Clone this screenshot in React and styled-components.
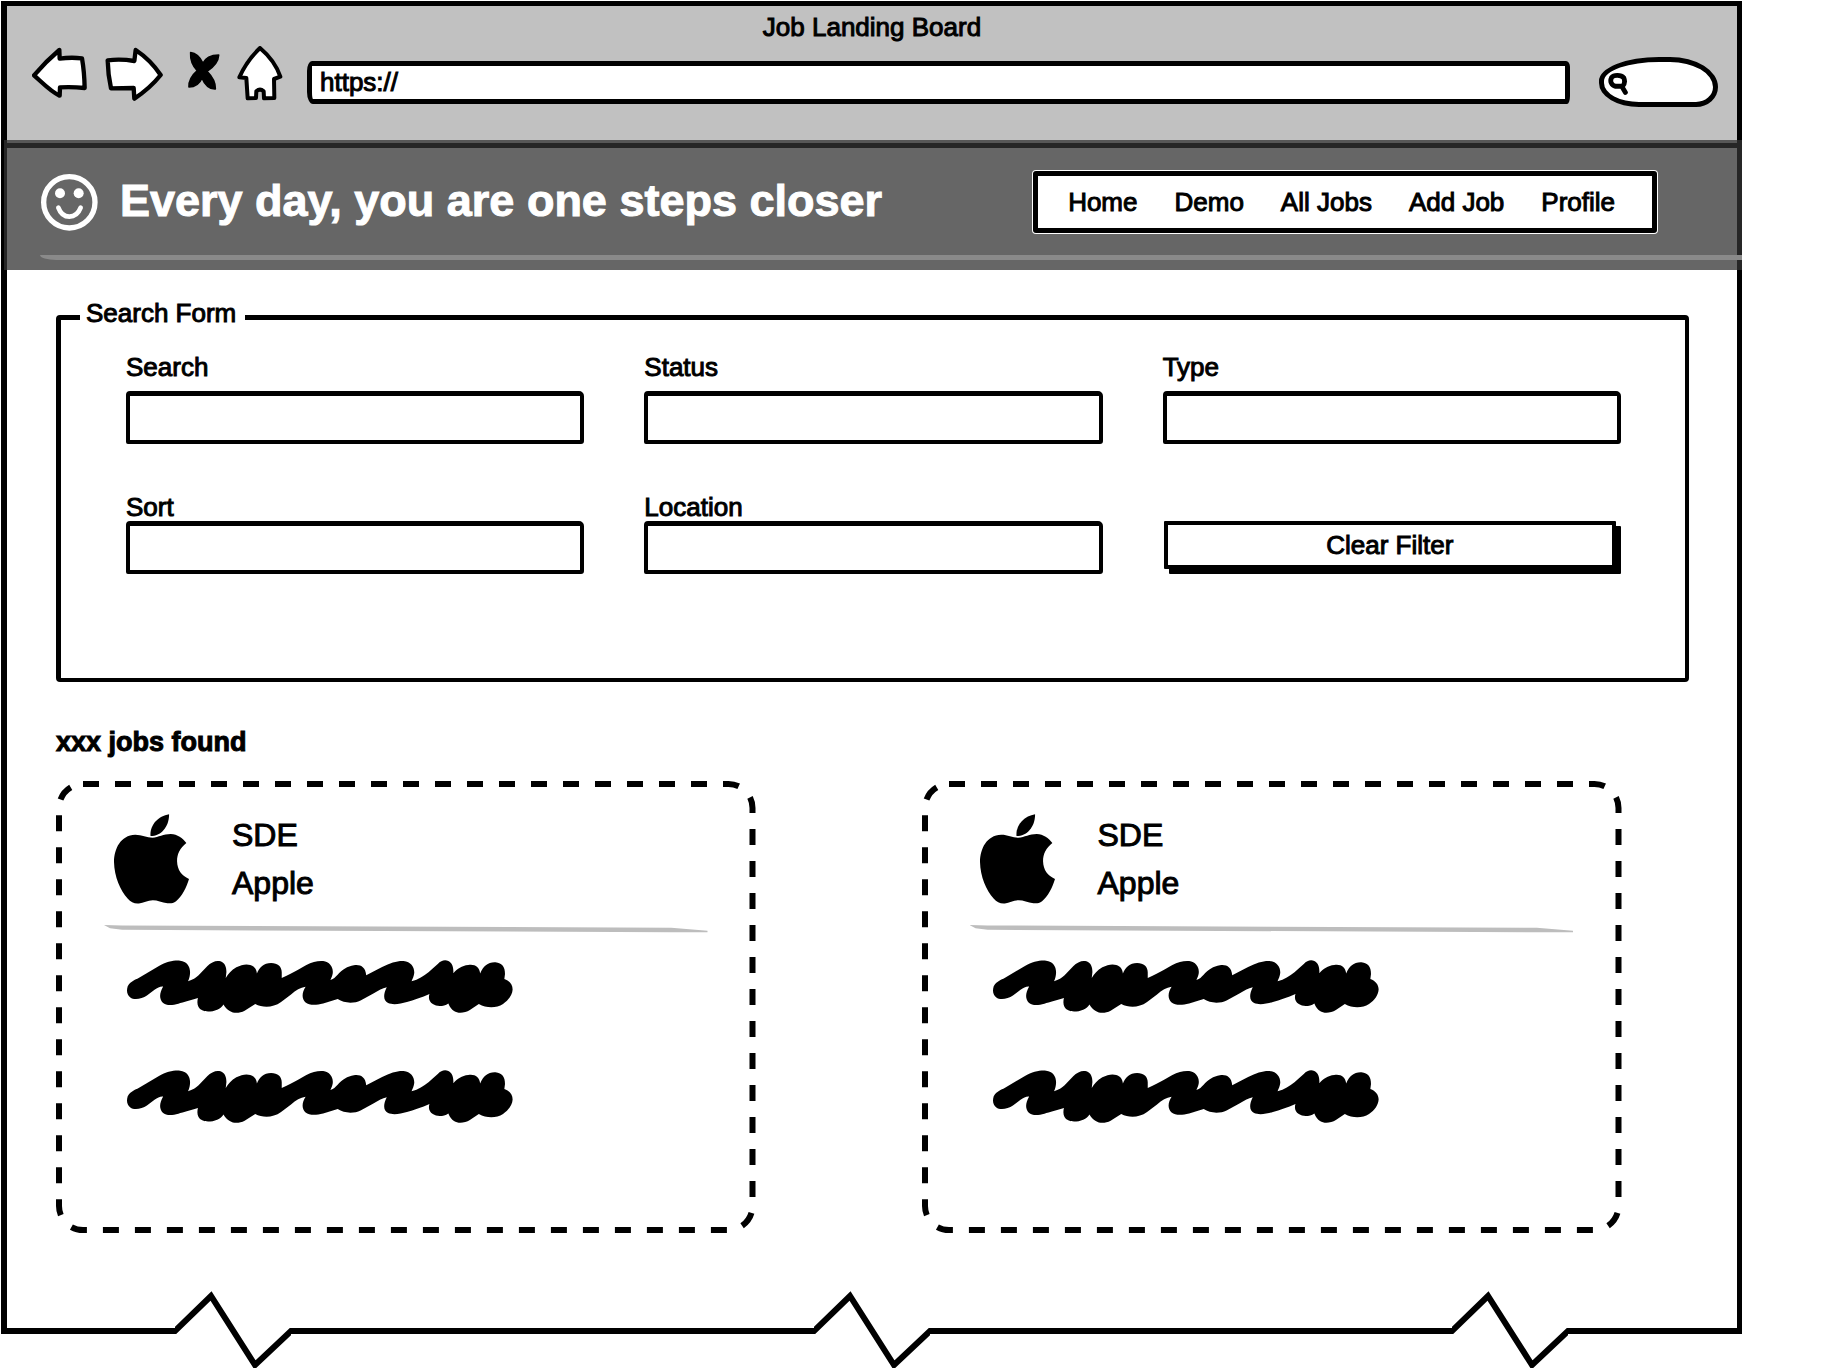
import React from "react";
import styled, { createGlobalStyle } from "styled-components";

const ink = "#000";
const paper = "#fff";

const GlobalStyle = createGlobalStyle`
  *, *::before, *::after { box-sizing: border-box; }
  body {
    margin: 0;
    background: ${paper};
    color: ${ink};
    font-family: "Liberation Sans", Arial, sans-serif;
    font-size: 26px;
    line-height: 30px;
    -webkit-text-stroke: 1px currentColor;
  }
  button, input, select { font: inherit; color: inherit; -webkit-text-stroke: inherit; }
`;

const Page = styled.div`
  padding: 1px 100px 0 1px;
`;

const BrowserWindow = styled.div`
  border: solid ${ink};
  border-width: 5px 5px 0 6px;
`;

const Chrome = styled.div`
  padding: 6px 0 36px;
  background: #c1c1c1;
  border-bottom: 5px solid ${ink};
`;

const WindowTitle = styled.div`
  text-align: center;
`;

const Controls = styled.div`
  display: flex;
  align-items: flex-start;
  gap: 17px;
  margin-top: 4px;
  padding: 0 19px 0 25px;
`;

const ChromeButton = styled.button`
  display: block;
  padding: 0;
  border: 0;
  background: none;
  svg { display: block; }
`;

const Address = styled.input`
  flex: 1;
  min-width: 0;
  height: 43px;
  margin: 15px 12px 0 0;
  padding: 0 8px;
  border: 5px solid ${ink};
  border-radius: 5px 4px 3px 6px / 10px 6px 8px 12px;
  background: ${paper};
`;

const QuickSearch = styled.label`
  display: flex;
  align-items: center;
  width: 119px;
  height: 50px;
  margin-top: 11px;
  padding: 3px 12px 0 4px;
  border: 5px solid ${ink};
  border-radius: 60px 48px 22px 40px / 24px 30px 20px 24px;
  background: ${paper};
  svg { flex: none; }
  input {
    width: 100%;
    min-width: 0;
    padding: 0;
    border: 0;
    outline: 0;
    background: none;
  }
`;

const Banner = styled.header`
  margin: -8px -5px 0 -3px;
  padding-bottom: 10px;
  background: rgba(51, 51, 51, 0.75);
  color: ${paper};
`;

const BannerRow = styled.div`
  display: flex;
  align-items: center;
  padding: 31px 85px 22px 37px;
`;

const Tagline = styled.h1`
  flex: 1;
  margin: 0 0 0 22px;
  padding-bottom: 2px;
  font-size: 45px;
  line-height: 50px;
`;

const Nav = styled.nav`
  display: flex;
  gap: 37px;
  align-items: center;
  height: 62px;
  padding: 0 37px 0 30px;
  border: 5px solid ${ink};
  border-radius: 3px;
  box-shadow: 0 0 0 1px ${paper};
  background: ${paper};
`;

const NavLink = styled.a`
  color: ${ink};
  text-decoration: none;
  white-space: nowrap;
`;

const BannerRule = styled.hr`
  height: 5px;
  margin: 0 0 0 36px;
  border: 0;
  border-bottom-left-radius: 16px 5px;
  background: #8a8a8a;
`;

const Main = styled.main`
  padding: 28px 48px 95px 49px;
`;

const SearchForm = styled.fieldset`
  min-width: 0;
  margin: 0;
  padding: 17px 64px 104px 65px;
  border: 4px solid ${ink};
  border-top-width: 5px;
  border-left-width: 5px;
  border-radius: 4px;
`;

const Legend = styled.legend`
  margin-left: -46px;
  padding: 0 9px 8px 6px;
`;

const Fields = styled.div`
  display: grid;
  grid-template-columns: repeat(3, 1fr);
  column-gap: 60px;
  row-gap: 49px;
  align-items: end;
`;

const Field = styled.label`
  display: block;
  line-height: 28px;
`;

const FieldBox = styled.input`
  display: block;
  width: 100%;
  height: 53px;
  margin-top: ${(p) => (p.$tight ? 0 : 10)}px;
  padding: 0 12px;
  border: 4px solid ${ink};
  border-top-width: 5px;
  border-radius: 4px 5px 3px 2px;
  background: ${paper};
`;

const ClearButton = styled.button`
  height: 48px;
  margin: 0 5px 5px 1px;
  padding: 0;
  border: 4px solid ${ink};
  border-radius: 1px;
  box-shadow: 5px 5px 0 ${ink};
  background: ${paper};
`;

const ResultCount = styled.h2`
  margin: 44px 0 23px;
  font-size: 27px;
  line-height: 32px;
`;

const JobList = styled.div`
  display: grid;
  grid-template-columns: repeat(2, 1fr);
  gap: 166px;
  margin-right: 68px;
`;

const Card = styled.article`
  position: relative;
  padding: 30px 48px 110px;
`;

const DashedOutline = styled.svg`
  position: absolute;
  inset: 3px;
  width: calc(100% - 6px);
  height: calc(100% - 6px);
  overflow: visible;
  pointer-events: none;
`;

const CardHead = styled.div`
  display: flex;
  align-items: center;
  gap: 43px;
  padding-left: 10px;
`;

const JobText = styled.div`
  font-size: 32px;
  line-height: 48px;
`;

const JobTitle = styled.h3`
  margin: 0;
  font: inherit;
`;

const Company = styled.p`
  margin: 0;
`;

const CardRule = styled.hr`
  height: 8px;
  margin: 18px 0 27px;
  border: 0;
  background: #bdbdbd;
  clip-path: polygon(0 0, 3% 6%, 94% 34%, 100% 72%, 100% 90%, 94% 92%, 3% 60%, 1% 40%);
`;

const Scribbles = styled.div`
  display: grid;
  gap: 57px;
  padding-left: 22px;
  svg { display: block; }
`;

const TornEdge = styled.div`
  display: flex;
  align-items: flex-start;
  margin-top: -37px;
  svg { flex: none; display: block; }
`;

const EdgeLine = styled.span`
  flex: ${(p) => p.$span} 1 0;
  height: 6px;
  margin-top: 37px;
  background: ${ink};
`;

const outline = {
  fill: paper,
  stroke: ink,
  strokeWidth: 13,
  strokeLinejoin: "round",
};

const BackIcon = () => (
  <svg width="56" height="55" viewBox="96 138 168 165" aria-hidden="true">
    <path {...outline} d="M102 226C126 198 152 172 178 150L179 176Q212 171 246 175Q253 215 254 264Q218 260 180 262L179 287C152 275 125 246 102 226Z" />
  </svg>
);

const ForwardIcon = () => (
  <svg width="58" height="55" viewBox="315 138 174 165" aria-hidden="true">
    <path {...outline} d="M323 181Q362 176 403 183L407 150C434 168 464 198 482 225C462 250 430 278 403 296L401 264L333 265Q324 225 323 181Z" />
  </svg>
);

const StopIcon = () => (
  <svg width="40" height="55" viewBox="540 138 120 165" aria-hidden="true">
    <path stroke={ink} strokeWidth="5" strokeLinejoin="round" d="M572 158C590 160 600 172 609 190C618 170 636 165 656 165C655 185 638 203 621 214C635 228 647 246 646 267C630 268 614 255 606 234C598 253 584 261 567 261C566 243 577 225 592 212C575 195 571 175 572 158Z" />
  </svg>
);

const HomeIcon = () => (
  <svg width="53" height="55" viewBox="711 138 159 165" aria-hidden="true">
    <path {...outline} strokeWidth="12" d="M780 144C806 166 831 200 841 230L822 237L823 294L792 295L791 274Q780 264 769 274L768 294L743 295L739 234L718 232C732 200 755 168 780 144Z" />
  </svg>
);

const SearchIcon = () => (
  <svg width="20" height="24" viewBox="622 220 62 72" aria-hidden="true">
    <path d="M633 236C640 227 662 227 671 237C675 247 673 257 667 263L645 263C633 261 627 248 633 236ZM665 264L676 282" fill="none" stroke={ink} strokeWidth="15" strokeLinecap="round" />
  </svg>
);

const SmileIcon = () => (
  <svg width="57" height="57" viewBox="123 520 171 171" aria-hidden="true" fill="none" stroke={paper}>
    <circle cx="208" cy="605" r="77" strokeWidth="16" />
    <circle cx="180" cy="578" r="15" fill={paper} stroke="none" />
    <circle cx="236" cy="578" r="15" fill={paper} stroke="none" />
    <path d="M175 621C188 657 228 657 242 621" strokeWidth="14" strokeLinecap="round" />
  </svg>
);

const AppleLogo = () => (
  <svg width="75" height="90" viewBox="221 336 226 270" role="img" aria-label="Apple">
    <path d="M221 480C222 440 240 400 285 398C305 398 320 407 337 407C355 406 370 396 392 396C412 397 428 408 439 423C420 438 411 455 411 478C412 505 425 522 447 531C440 555 425 585 408 598C400 604 392 605 382 604C365 602 352 595 338 595C322 595 310 603 296 605C282 606 272 602 262 590C240 565 222 525 221 480Z" />
    <path d="M387 336C355 341 328 368 331 402C362 402 387 375 387 336Z" />
  </svg>
);

const Scribble = () => (
  <svg width="388" height="53" viewBox="80 86 1165 160" aria-hidden="true">
    <path d="M82 165C90 150 105 145 115 140L175 105C200 90 220 87 240 88C262 90 272 108 270 128C269 138 267 143 264 150C278 146 288 140 296 132L322 105C334 92 350 86 362 90C376 95 380 108 380 122L378 140C385 128 395 117 410 108C425 100 440 97 452 101C464 105 471 113 472 127C480 108 492 95 515 95C535 95 547 106 547 123L547 140C565 133 580 124 595 116L620 102C640 91 655 88 672 89C692 91 703 108 701 126C700 134 697 140 694 146C705 143 708 138 715 131C730 115 745 105 765 102C785 99 800 108 802 132L850 107C875 95 895 88 915 89C937 91 948 108 947 125C946 135 942 142 939 150C960 145 975 135 990 123L1018 98C1028 87 1040 84 1050 89C1062 95 1066 108 1065 126C1078 112 1090 103 1110 101C1130 98 1144 106 1146 127C1155 105 1170 92 1192 93C1213 95 1221 108 1221 128L1219 143C1235 149 1244 160 1244 175C1243 192 1232 207 1215 219C1195 232 1165 232 1142 219L1115 237C1100 246 1080 249 1067 240C1060 235 1054 228 1050 217C1035 227 1015 227 1003 219C992 211 989 200 993 189C970 199 945 208 925 213C905 219 882 222 868 216C853 208 853 190 864 168C850 171 840 177 825 186L785 208C765 218 735 217 716 204L672 217C650 223 630 223 619 214C606 203 608 185 619 167C603 169 590 178 575 190L545 213C520 231 490 231 467 219L435 239C420 247 402 248 390 240C382 235 376 228 371 220C362 238 325 247 307 238C293 231 290 217 294 201C275 207 250 214 235 218C215 224 198 224 188 215C176 203 178 185 189 166C180 165 172 170 163 176L140 193C125 204 100 207 90 199C79 190 78 178 82 165Z" />
  </svg>
);

const Tear = () => (
  <svg width="116" height="78" viewBox="0 0 116 78" aria-hidden="true">
    <path d="M-2 40H0L36 5L80 74L116 40H118" fill="none" stroke={ink} strokeWidth="6" />
  </svg>
);

const navItems = ["Home", "Demo", "All Jobs", "Add Job", "Profile"];

const fields = [
  { label: "Search" },
  { label: "Status" },
  { label: "Type" },
  { label: "Sort", tight: true },
  { label: "Location", tight: true },
];

const jobs = [
  { id: 1, title: "SDE", company: "Apple" },
  { id: 2, title: "SDE", company: "Apple" },
];

function JobCard({ job }) {
  return (
    <Card>
      <DashedOutline aria-hidden="true">
        <rect width="100%" height="100%" rx="24" fill="none" stroke={ink} strokeWidth="6" strokeDasharray="16 16" />
      </DashedOutline>
      <CardHead>
        <AppleLogo />
        <JobText>
          <JobTitle>{job.title}</JobTitle>
          <Company>{job.company}</Company>
        </JobText>
      </CardHead>
      <CardRule />
      <Scribbles>
        <Scribble />
        <Scribble />
      </Scribbles>
    </Card>
  );
}

export default function App() {
  return (
    <Page>
      <GlobalStyle />
      <BrowserWindow>
        <Chrome>
          <WindowTitle>Job Landing Board</WindowTitle>
          <Controls>
            <ChromeButton type="button" aria-label="Back"><BackIcon /></ChromeButton>
            <ChromeButton type="button" aria-label="Forward"><ForwardIcon /></ChromeButton>
            <ChromeButton type="button" aria-label="Stop"><StopIcon /></ChromeButton>
            <ChromeButton type="button" aria-label="Home"><HomeIcon /></ChromeButton>
            <Address type="text" aria-label="Address" defaultValue="https://" />
            <QuickSearch>
              <SearchIcon />
              <input type="text" aria-label="Web search" />
            </QuickSearch>
          </Controls>
        </Chrome>
        <Banner>
          <BannerRow>
            <SmileIcon />
            <Tagline>Every day, you are one steps closer</Tagline>
            <Nav>
              {navItems.map((item) => (
                <NavLink href="#" key={item}>{item}</NavLink>
              ))}
            </Nav>
          </BannerRow>
          <BannerRule />
        </Banner>
        <Main>
          <SearchForm>
            <Legend>Search Form</Legend>
            <Fields>
              {fields.map((field) => (
                <Field key={field.label}>
                  {field.label}
                  <FieldBox type="text" $tight={field.tight} />
                </Field>
              ))}
              <ClearButton type="button">Clear Filter</ClearButton>
            </Fields>
          </SearchForm>
          <ResultCount>xxx jobs found</ResultCount>
          <JobList>
            {jobs.map((job) => (
              <JobCard job={job} key={job.id} />
            ))}
          </JobList>
        </Main>
      </BrowserWindow>
      <TornEdge>
        <EdgeLine $span={1} />
        <Tear />
        <EdgeLine $span={3} />
        <Tear />
        <EdgeLine $span={3} />
        <Tear />
        <EdgeLine $span={1} />
      </TornEdge>
    </Page>
  );
}
